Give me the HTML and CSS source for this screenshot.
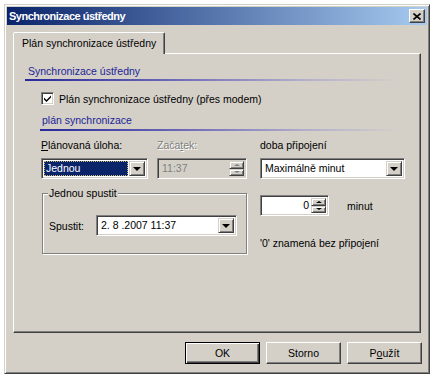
FILE: index.html
```html
<!DOCTYPE html>
<html lang="cs">
<head>
    <meta charset="UTF-8">
    <title>Synchronizace ústředny</title>
    <link rel="stylesheet" href="styles.css">
</head>
<body>

    <div class="window">
        <!-- Title bar -->
        <div class="titlebar">
            <span class="title">Synchronizace ústředny</span>
            <button class="close-btn">
                <svg width="8" height="7" viewBox="0 0 8 7"><path d="M0.5 0.5 L7.5 6.5 M7.5 0.5 L0.5 6.5" stroke="#000" stroke-width="1.6"/></svg>
            </button>
        </div>

        <div class="body">
            <div class="tabs">
                <div class="tab">Plán synchronizace ústředny</div>
            </div>

            <div class="page">
                <div class="section-head">Synchronizace ústředny</div>

                <div class="check-row">
                    <span class="checkbox">
                        <svg width="9" height="9" viewBox="0 0 9 9"><path d="M1 3.5 L3.5 6 L8 1.5 L8 3.5 L3.5 8 L1 5.5 Z" fill="#000"/></svg>
                    </span>
                    <span>Plán synchronizace ústředny (přes modem)</span>
                </div>

                <div class="sub-head">plán synchronizace</div>

                <div class="settings">
                    <div class="left-col">
                        <div class="fields">
                            <div class="field task">
                                <div class="label"><u>P</u>lánovaná úloha:</div>
                                <div class="combo">
                                    <span class="value selected">Jednou</span>
                                    <span class="drop-btn"><span class="arrow"></span></span>
                                </div>
                            </div>
                            <div class="field start">
                                <div class="label disabled">Zača<u>t</u>ek:</div>
                                <div class="spin-box off">
                                    <span class="value">11:37</span>
                                    <span class="spin">
                                        <span class="spin-btn"><span class="up"></span></span>
                                        <span class="spin-btn"><span class="down"></span></span>
                                    </span>
                                </div>
                            </div>
                        </div>

                        <fieldset class="group">
                            <legend>Jednou spustit</legend>
                            <div class="run-row">
                                <span class="run-label">Spustit:</span>
                                <div class="combo date">
                                    <span class="value">2. 8 .2007 11:37</span>
                                    <span class="drop-btn"><span class="arrow"></span></span>
                                </div>
                            </div>
                        </fieldset>
                    </div>

                    <div class="right-col">
                        <div class="label">doba připojení</div>
                        <div class="combo wide">
                            <span class="value">Maximálně minut</span>
                            <span class="drop-btn"><span class="arrow"></span></span>
                        </div>
                        <div class="minutes-row">
                            <div class="spin-box minutes">
                                <span class="value">0</span>
                                <span class="spin">
                                    <span class="spin-btn"><span class="up"></span></span>
                                    <span class="spin-btn"><span class="down"></span></span>
                                </span>
                            </div>
                            <span>minut</span>
                        </div>
                        <div class="note">'0' znamená bez připojení</div>
                    </div>
                </div>
            </div>

            <!-- Dialog buttons -->
            <div class="buttons">
                <button class="btn default">OK</button>
                <button class="btn">Storno</button>
                <button class="btn">P<u>o</u>užít</button>
            </div>
        </div>
    </div>

</body>
</html>
```

FILE: styles.css
```css
/* General */
body {
    margin: 0;
    background: #fff;
    font-family: "Liberation Sans", Arial, sans-serif;
    font-size: 10.5px;
    color: #000;
}

u {
    text-decoration-thickness: 1px;
    text-underline-offset: 1px;
}

/* Window frame */
.window {
    box-sizing: border-box;
    width: 426px;
    height: 370px;
    margin: 4px 0 0 4px;
    padding: 2px;
    background: #d4d0c8;
    border: 1px solid;
    border-color: #d4d0c8 #404040 #404040 #d4d0c8;
    box-shadow: inset 1px 1px #fff, inset -1px -1px #808080;
    display: flex;
    flex-direction: column;
}

.titlebar {
    height: 18px;
    padding: 0 2px 0 2px;
    background: linear-gradient(to right, #0a246a, #a6caf0);
    display: flex;
    align-items: center;
    justify-content: space-between;
}

.title {
    color: #fff;
    font-weight: bold;
    font-size: 11px;
    letter-spacing: -0.5px;
}

.close-btn {
    box-sizing: border-box;
    width: 16px;
    height: 14px;
    padding: 0;
    background: #d4d0c8;
    border: 1px solid;
    border-color: #fff #404040 #404040 #fff;
    box-shadow: inset -1px -1px #808080;
    display: flex;
    align-items: center;
    justify-content: center;
}

.body {
    padding: 7px 6px 0 6px;
}

/* Tab */
.tabs {
    display: flex;
}

.tab {
    position: relative;
    z-index: 1;
    height: 21px;
    line-height: 20px;
    padding: 0 8px 0 8px;
    margin-bottom: -1px;
    background: #d4d0c8;
    border: 1px solid;
    border-bottom: none;
    border-color: #fff #404040 transparent #fff;
    box-shadow: inset -1px 0 #808080;
    border-radius: 2px 2px 0 0;
}

.page {
    box-sizing: border-box;
    height: 280px;
    border: 1px solid;
    border-color: #fff #404040 #404040 #fff;
    box-shadow: inset -1px -1px #808080;
    padding-top: 11px;
}

/* Section headings with fading underline */
.section-head,
.sub-head {
    line-height: 13px;
    color: #1a2496;
    background: linear-gradient(to right, #28289a, #6e6ab8 40%, #b4b0cc 75%, #d4d0c8) bottom left / 100% 2px no-repeat;
}

.section-head {
    margin: 0 20px 0 11px;
    padding: 0 0 3px 3px;
}

.sub-head {
    margin: 9px 20px 0 26px;
    padding: 0 0 4px 2px;
}

.check-row {
    margin: 11px 0 0 27px;
    display: flex;
    align-items: center;
    gap: 5px;
}

.checkbox {
    box-sizing: border-box;
    width: 13px;
    height: 13px;
    background: #fff;
    border: 1px solid;
    border-color: #808080 #fff #fff #808080;
    box-shadow: inset 1px 1px #404040, inset -1px -1px #d4d0c8;
    display: flex;
    align-items: center;
    justify-content: center;
}

/* Settings area */
.settings {
    margin: 8px 0 0 27px;
    display: grid;
    grid-template-columns: 206px 145px;
    column-gap: 13px;
}

.label {
    line-height: 13px;
    margin-bottom: 6px;
}

.label.disabled {
    color: #808080;
    text-shadow: 1px 1px #fff;
}

.fields {
    display: flex;
    gap: 9px;
}

.task {
    width: 107px;
}

.start {
    width: 90px;
}

/* Sunken inputs */
.combo,
.spin-box {
    box-sizing: border-box;
    height: 21px;
    background: #fff;
    border: 1px solid;
    border-color: #808080 #fff #fff #808080;
    box-shadow: inset 1px 1px #404040, inset -1px -1px #d4d0c8;
    padding: 2px;
    display: flex;
    align-items: stretch;
}

.combo .value {
    flex: 1;
    padding-left: 2px;
    line-height: 15px;
    white-space: nowrap;
    overflow: hidden;
}

.combo .value.selected {
    margin-right: 1px;
    background: #0a246a;
    color: #fff;
    outline: 1px dotted #c8b878;
    outline-offset: -1px;
}

.drop-btn {
    box-sizing: border-box;
    width: 16px;
    background: #d4d0c8;
    border: 1px solid;
    border-color: #d4d0c8 #404040 #404040 #d4d0c8;
    box-shadow: inset 1px 1px #fff, inset -1px -1px #808080;
    display: flex;
    align-items: center;
    justify-content: center;
}

.arrow {
    width: 0;
    height: 0;
    border-left: 4px solid transparent;
    border-right: 4px solid transparent;
    border-top: 4px solid #000;
}

.spin-box .value {
    flex: 1;
    line-height: 15px;
    padding: 0 2px;
}

.spin-box.off {
    background: #d4d0c8;
    color: #808080;
}

.spin-box.minutes {
    width: 69px;
}

.spin-box.minutes .value {
    text-align: right;
}

.spin {
    width: 15px;
    display: flex;
    flex-direction: column;
}

.spin-btn {
    flex: 1;
    box-sizing: border-box;
    background: #d4d0c8;
    border: 1px solid;
    border-color: #d4d0c8 #404040 #404040 #d4d0c8;
    box-shadow: inset 1px 1px #fff, inset -1px -1px #808080;
    display: flex;
    align-items: center;
    justify-content: center;
}

.up,
.down {
    width: 0;
    height: 0;
    border-left: 3px solid transparent;
    border-right: 3px solid transparent;
}

.up {
    border-bottom: 2px solid #000;
}

.down {
    border-top: 2px solid #000;
}

.off .up {
    border-bottom-color: #808080;
}

.off .down {
    border-top-color: #808080;
}

/* Group box */
.group {
    box-sizing: border-box;
    width: 205px;
    margin: 8px 0 0 1px;
    padding: 0 0 17px 0;
    border: 1px solid #808080;
    box-shadow: inset 1px 1px #fff, 1px 1px #fff;
}

.group legend {
    margin-left: 5px;
    padding: 0 1px;
    line-height: 13px;
    background: #d4d0c8;
}

.run-row {
    margin: 15px 0 0 6px;
    display: flex;
    align-items: center;
}

.run-label {
    width: 47px;
}

.combo.date {
    width: 141px;
}

.minutes-row {
    margin-top: 16px;
    display: flex;
    align-items: center;
    gap: 18px;
}

.note {
    margin-top: 21px;
    line-height: 13px;
}

/* Dialog buttons */
.buttons {
    margin: 9px -1px 0 0;
    display: flex;
    justify-content: flex-end;
    gap: 6px;
}

.btn {
    box-sizing: border-box;
    width: 75px;
    height: 22px;
    padding: 0;
    font-family: inherit;
    font-size: 10.5px;
    color: #000;
    background: #d4d0c8;
    border: 1px solid;
    border-color: #fff #404040 #404040 #fff;
    box-shadow: inset -1px -1px #808080;
}

.btn.default {
    border-color: #000;
    box-shadow: inset 1px 1px #fff, inset -1px -1px #404040, inset -2px -2px #808080;
}
```
